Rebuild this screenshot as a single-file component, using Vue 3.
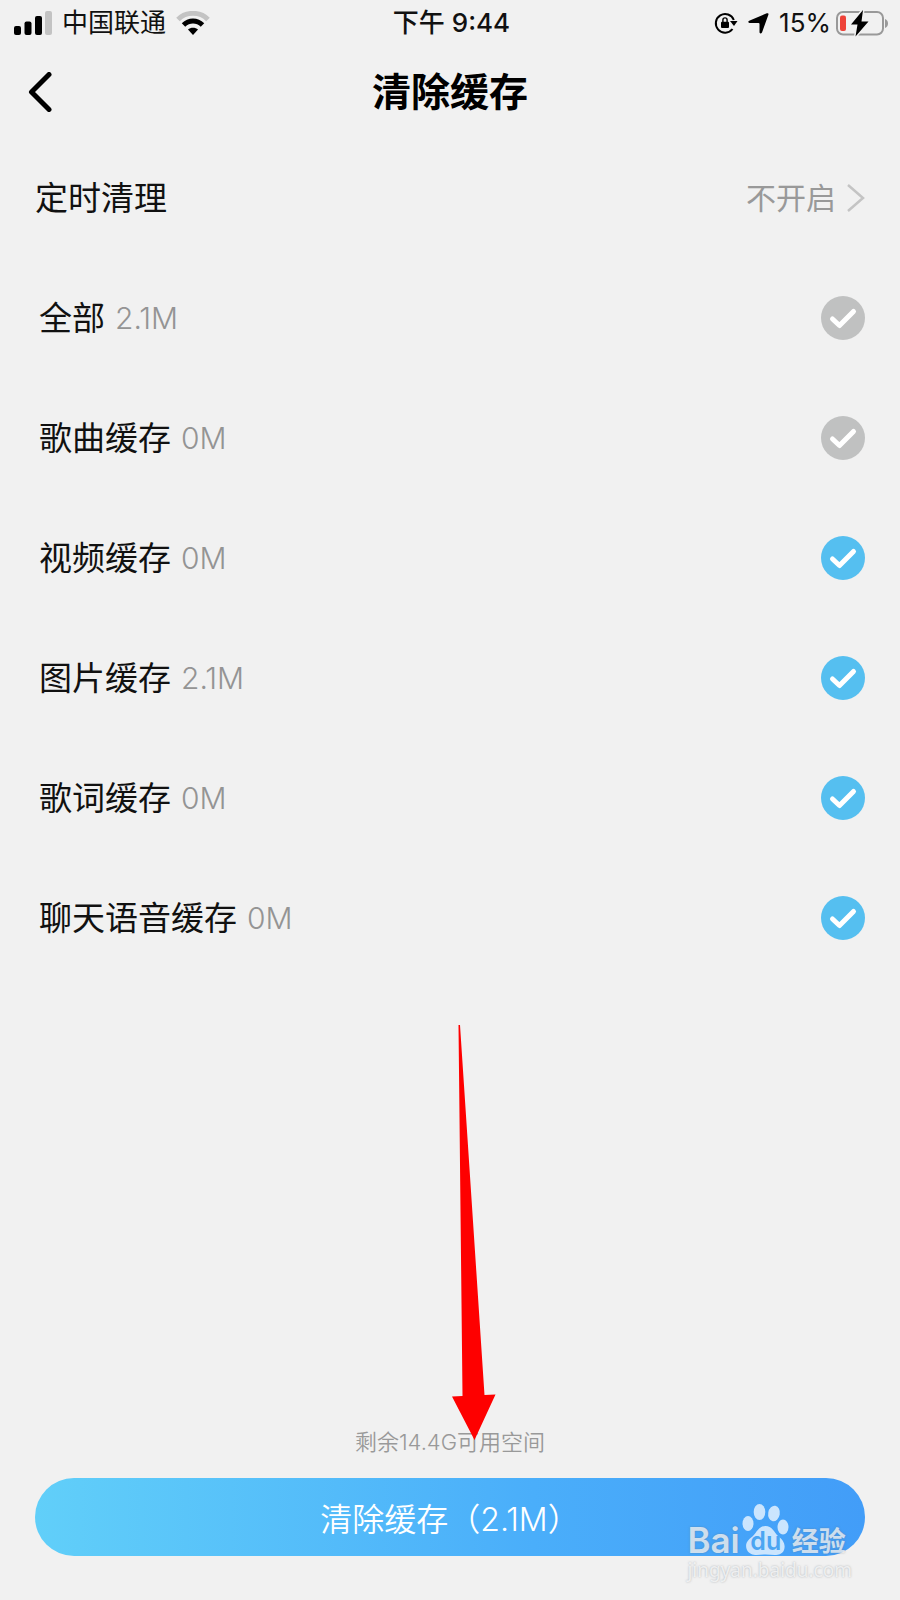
<script setup>
import { ref, computed } from "vue"

const timer = ref("不开启")
const freeSpace = ref("14.4G")

const caches = ref([
    { id: "song", name: "歌曲缓存", size: 0, checked: false },
    { id: "video", name: "视频缓存", size: 0, checked: true },
    { id: "image", name: "图片缓存", size: 2.1, checked: true },
    { id: "lyric", name: "歌词缓存", size: 0, checked: true },
    { id: "voice", name: "聊天语音缓存", size: 0, checked: true },
])

const total = computed(() => caches.value.reduce((sum, c) => sum + c.size, 0))

const selected = computed(() => {
    return caches.value.filter(c => c.checked).reduce((sum, c) => sum + c.size, 0)
})

const allChecked = computed({
    get: () => caches.value.every(c => c.checked),
    set: (val) => caches.value.forEach(c => { c.checked = val })
})

function clearCache() {
    caches.value.forEach(c => {
        if (c.checked) c.size = 0
    })
}
</script>

<template>
    <div class="page">
        <div class="status">
            <div class="status-left">
                <svg class="signal" width="38" height="24" viewBox="0 0 38 24">
                    <rect x="0" y="15" width="7" height="9" rx="2" />
                    <rect x="10.500" y="10.500" width="7" height="13.500" rx="2" />
                    <rect x="21" y="5" width="7" height="19" rx="2" />
                    <rect x="31" y="0" width="7" height="24" rx="2" fill="#c3c3c3" />
                </svg>
                <span>中国联通</span>
                <svg class="wifi" width="34" height="24" viewBox="0 0 34 24">
                    <path d="M2 8.500C10 .3 24 .3 32 8.500" fill="none" stroke="#c3c3c3" stroke-width="5" />
                    <path d="M7.500 14C13 8.700 21 8.700 26.500 14" fill="none" stroke="#000" stroke-width="5" />
                    <path d="M12 18.600C14.500 16 19.500 16 22 18.600L17 24Z" />
                </svg>
            </div>
            <span class="time">下午 9:44</span>
            <div class="status-right">
                <svg width="24" height="22" viewBox="0 0 24 22">
                    <path d="M18.500 17A9.300 9.300 0 1 1 19.800 8" fill="none" stroke="#000" stroke-width="2" />
                    <path d="M16 9H23.500L20 14Z" />
                    <rect x="7" y="9.800" width="8" height="6.200" rx="1" />
                    <path d="M8.900 10V8A2.100 2.100 0 0 1 13.100 8V10" fill="none" stroke="#000" stroke-width="1.400" />
                </svg>
                <svg width="21" height="21" viewBox="0 0 21 21">
                    <path d="M18.800 .3Q21 -.3 20.400 1.800L14 19.500Q12.500 21.500 11.500 19.500V11Q11.500 10 10.500 10H1.500Q-.8 9.200 1.200 7.800Z" />
                </svg>
                <div class="power">
                    <span>15%</span>
                    <svg class="battery" width="54" height="28" viewBox="0 0 54 28">
                        <rect x="2" y="3" width="46" height="22.500" rx="6" fill="none" stroke="#999" stroke-width="2" />
                        <path d="M50 10C54 11 54 18 50 19Z" fill="#999" />
                        <rect x="5" y="6.500" width="6" height="15.500" rx="2" fill="#ee4238" />
                        <path d="M28 1L16 15.500H22.500L20.500 27.500L33.500 12.500H26.500Z" stroke="#f1f1f1" stroke-width="3" paint-order="stroke" />
                    </svg>
                </div>
            </div>
        </div>

        <header class="nav">
            <button class="back" type="button" aria-label="返回">
                <svg width="24" height="40" viewBox="0 0 24 40">
                    <path d="M21 2.500L3.500 20L21 37.500" fill="none" stroke="#000" stroke-width="5" stroke-linecap="round" stroke-linejoin="round" />
                </svg>
            </button>
            <h1>清除缓存</h1>
        </header>

        <main>
            <button class="row timer" type="button">
                <span>定时清理</span>
                <span class="timer-value">
                    {{ timer }}
                    <svg width="19" height="30" viewBox="0 0 19 30">
                        <path d="M2 2L17 15L2 28" fill="none" stroke="#c4c4c4" stroke-width="2.500" />
                    </svg>
                </span>
            </button>

            <label class="row">
                <span class="name">全部</span>
                <span class="size">{{ total }}M</span>
                <span class="check">
                    <input type="checkbox" v-model="allChecked">
                    <svg viewBox="0 0 44 44"><path d="M11.500 23L18.500 29.500L32.500 15.500" /></svg>
                </span>
            </label>
            <label class="row" v-for="item in caches" :key="item.id">
                <span class="name">{{ item.name }}</span>
                <span class="size">{{ item.size }}M</span>
                <span class="check">
                    <input type="checkbox" v-model="item.checked">
                    <svg viewBox="0 0 44 44"><path d="M11.500 23L18.500 29.500L32.500 15.500" /></svg>
                </span>
            </label>
        </main>

        <footer>
            <p>剩余{{ freeSpace }}可用空间</p>
            <button class="clear" type="button" @click="clearCache">清除缓存（{{ selected }}M）</button>

            <svg class="arrow" width="44" height="416" viewBox="0 0 44 416">
                <path d="M6.500 0H8L32.500 370L43.500 369.500L22.500 415L0 371.500L10.500 371Z" fill="#fe0000" />
            </svg>

            <div class="watermark">
                <div class="brand">
                    <span class="bai">Bai</span>
                    <span class="paw">
                        <svg width="48" height="52" viewBox="0 0 48 52">
                            <ellipse cx="6" cy="19.500" rx="5.500" ry="7.500" />
                            <ellipse cx="17.500" cy="8" rx="5.800" ry="8" />
                            <ellipse cx="32" cy="9.500" rx="5.800" ry="7.800" transform="rotate(10 32 9.500)" />
                            <ellipse cx="41" cy="23" rx="5.500" ry="7.500" />
                            <path d="M23.500 22C30 22 32 28 36 32C41 36 44 40 42 46C39 53 31 50.500 23.500 50.500C16 50.500 9 53 5 46C2 39 7 35 11 32C15 28 17 22 23.500 22Z" />
                        </svg>
                        <span class="du">du</span>
                    </span>
                    <span class="jy">经验</span>
                </div>
                <div class="url">jingyan.baidu.com</div>
            </div>
        </footer>
    </div>
</template>

<style>
body {
    margin: 0;
    background: #f1f1f1;
}
</style>

<style scoped>
.page {
    display: flex;
    flex-direction: column;
    min-height: 100vh;
    box-sizing: border-box;
    background: #f1f1f1;
    color: #111;
    font-family: Inter, "Noto Sans CJK SC", sans-serif;
}

button {
    border: 0;
    padding: 0;
    background: none;
    color: inherit;
    font-family: inherit;
    cursor: pointer;
}

svg {
    display: block;
    flex: none;
}

.status {
    display: grid;
    grid-template-columns: 1fr auto 1fr;
    align-items: center;
    height: 46px;
    padding: 0 11px 0 14px;
    font-size: 26px;
    line-height: 32px;
}

.status-left, .status-right {
    display: flex;
    align-items: center;
    gap: 10px;
}

.status-right {
    justify-content: flex-end;
}

.power {
    display: flex;
    align-items: center;
    gap: 4px;
}

.time {
    font-weight: 500;
}

.nav {
    display: grid;
    grid-template-columns: 1fr auto 1fr;
    align-items: center;
    height: 92px;
    padding: 0 28px;
}

.back {
    justify-self: start;
}

h1 {
    margin: 0;
    font-size: 39px;
    line-height: 48px;
    font-weight: 600;
    color: #000;
}

.row {
    display: flex;
    align-items: center;
    width: 100%;
    height: 120px;
    box-sizing: border-box;
    padding: 0 35px 0 39px;
    font-size: 33px;
    line-height: 48px;
    cursor: pointer;
}

.timer {
    justify-content: space-between;
    padding-left: 35px;
}

.timer-value {
    display: flex;
    align-items: center;
    gap: 10px;
    font-size: 30px;
    color: #999;
}

.size {
    margin-left: 10px;
    font-size: 30px;
    font-weight: 300;
    color: #949494;
}

.check {
    display: grid;
    width: 44px;
    height: 44px;
    margin-left: auto;
}

.check input, .check svg {
    grid-area: 1 / 1;
}

.check input {
    appearance: none;
    width: 44px;
    height: 44px;
    margin: 0;
    border-radius: 50%;
    background: #c0c1c1;
}

.check input:checked {
    background: #55bff0;
}

.check svg {
    fill: none;
    stroke: #fff;
    stroke-width: 5;
    stroke-linecap: round;
    stroke-linejoin: round;
    pointer-events: none;
}

footer {
    position: relative;
    margin-top: auto;
    padding: 0 35px 44px;
    text-align: center;
}

p {
    margin: 0 0 20px;
    font-size: 22px;
    line-height: 32px;
    font-weight: 350;
    color: #999;
}

.clear {
    display: block;
    width: 100%;
    height: 78px;
    border-radius: 39px;
    background: linear-gradient(90deg, #61cff9, #4aaefa 60%, #429df8);
    color: #fff;
    font-size: 32px;
    font-weight: 350;
}

.arrow {
    position: absolute;
    left: 50%;
    bottom: 159px;
    margin-left: 2px;
}

.watermark {
    position: absolute;
    right: 48px;
    bottom: 16px;
    text-align: left;
    color: rgba(255, 255, 255, 0.72);
    text-shadow: 0 0 2px rgba(100, 110, 120, 0.5);
}

.brand {
    display: flex;
    align-items: flex-end;
    gap: 2px;
}

.bai {
    font-size: 35px;
    line-height: 32px;
    font-weight: 600;
}

.paw {
    position: relative;
}

.paw svg {
    fill: rgba(255, 255, 255, 0.72);
}

.du {
    position: absolute;
    left: 0;
    right: 0;
    bottom: 2px;
    text-align: center;
    font-size: 25px;
    line-height: 26px;
    font-weight: 600;
    color: #4ba5f2;
    text-shadow: none;
}

.jy {
    font-size: 27px;
    line-height: 28px;
    font-weight: 700;
}

.url {
    font-family: "Noto Sans", sans-serif;
    font-size: 19px;
    line-height: 28px;
}
</style>
